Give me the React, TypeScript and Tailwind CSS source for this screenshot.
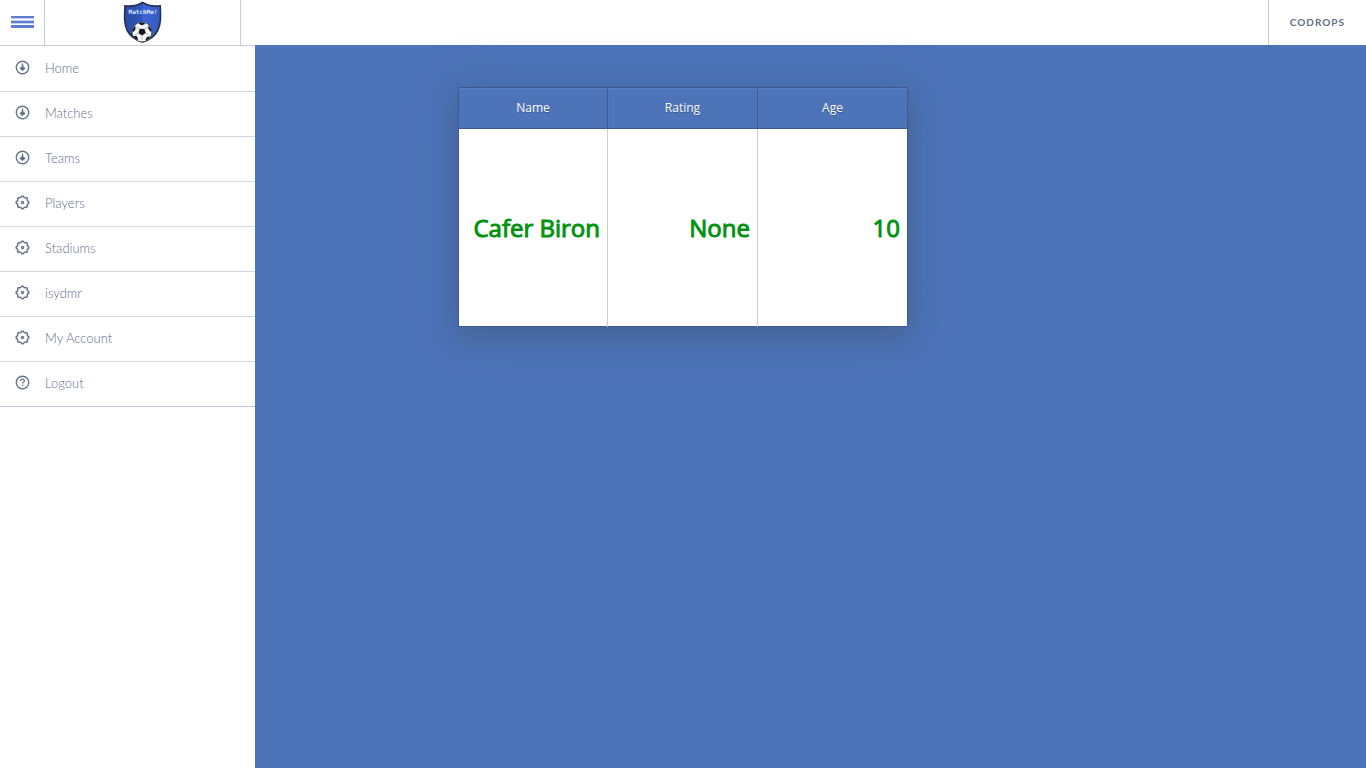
import React from "react";

type IconName = "arrow" | "cog" | "help";

const items: { label: string; icon: IconName }[] = [
  { label: "Home", icon: "arrow" },
  { label: "Matches", icon: "arrow" },
  { label: "Teams", icon: "arrow" },
  { label: "Players", icon: "cog" },
  { label: "Stadiums", icon: "cog" },
  { label: "isydmr", icon: "cog" },
  { label: "My Account", icon: "cog" },
  { label: "Logout", icon: "help" },
];

const gearPath = (() => {
  const points: string[] = [];
  for (let i = 0; i < 64; i++) {
    const a = (i / 64) * Math.PI * 2;
    const r = 5.8 + 0.5 * Math.tanh(2.5 * Math.cos(8 * a));
    points.push(`${(7.5 + r * Math.sin(a)).toFixed(2)} ${(7.5 - r * Math.cos(a)).toFixed(2)}`);
  }
  return `M${points.join("L")}Z`;
})();

function MenuIcon({ name }: { name: IconName }) {
  return (
    <svg viewBox="0 0 15 15" className="size-[15px] shrink-0" fill="none" stroke="#66748c" aria-hidden="true">
      {name === "cog" ? (
        <>
          <path d={gearPath} strokeWidth="1.5" strokeLinejoin="round" />
          <circle cx="7.5" cy="7.5" r="1.1" strokeWidth="1.3" />
        </>
      ) : (
        <circle cx="7.5" cy="7.5" r="6.2" strokeWidth="1.4" />
      )}
      {name === "arrow" && (
        <path d="M7 3.5h1l.5 3.500 1.700.8v1L7.500 11 4.800 8.800v-1L6.500 7Z" fill="#5f6f8c" stroke="none" />
      )}
      {name === "help" && (
        <>
          <path d="M5.6 6.1c0-1.2.8-1.9 1.9-1.9s1.9.7 1.9 1.7c0 1.2-1.8 1.2-1.8 2.6" strokeWidth="1.3" />
          <path d="M6.9 9.6h1.4v1.3H6.9Z" fill="#66748c" stroke="none" />
        </>
      )}
    </svg>
  );
}

function Logo() {
  return (
    <svg viewBox="0 0 40 42" className="h-[42px] w-10" role="img" aria-label="MatchMe!">
      <defs>
        <linearGradient id="shield" x1="0" x2="1">
          <stop offset="0" stopColor="#2a4ba4" />
          <stop offset=".5" stopColor="#3158c0" />
          <stop offset=".5" stopColor="#3f68d8" />
          <stop offset="1" stopColor="#3559be" />
        </linearGradient>
        <clipPath id="ball">
          <circle cx="19" cy="31" r="9.6" />
        </clipPath>
      </defs>
      <path
        d="M19.500 1.500c4.800 3 11 4.200 17.700 3.400.6 11 .8 18-2.500 24.600C31.500 35.500 26.500 39 19.500 41 12.500 39 7.500 35.500 4.200 29.500 1 23 1.400 16 2 4.900 9 5.700 14.700 4.500 19.500 1.500Z"
        fill="url(#shield)"
        stroke="#263249"
        strokeWidth="1.6"
      />
      <text x="20" y="13" textAnchor="middle" fontSize="6" fontWeight="700" fill="#dce6ff" fontFamily="DejaVu Sans Mono, monospace">
        MatchMe!
      </text>
      <circle cx="19" cy="31" r="9.900" fill="#f6f7f9" stroke="#1b202b" strokeWidth=".6" />
      <g clipPath="url(#ball)" fill="#11141b">
        <path d="m16.800 27.800 4.600.2 1.400 4-3.800 2.600-3.600-2.600Z" />
        <path d="m15.500 21 6-.2.500 2.200-3 1.300-3-1.200Z" />
        <path d="m25.300 24.500 3.500 3.500.3 3-2.200-.8-1.600-3Z" />
        <path d="m9 27 3.500-2-.2 3.500-2 2.500-2-.5Z" />
        <path d="m10.800 34.800 3 .5 1.300 3-1.300 2-4-3Z" />
        <path d="m22.500 38.800 1.500-2.800 3-.7-1 4-3 1Z" />
      </g>
      <path
        d="m16.800 27.800-3.800-1.500m8.400 1.700 3.300-1.500m-1.900 5.500 3 2.300m-6.800.3.200 4m-3.800-6.600-3.400 2"
        stroke="#8b909a"
        strokeWidth=".6"
        fill="none"
      />
    </svg>
  );
}

const headers = ["Name", "Rating", "Age"];
const players = [["Cafer Biron", "None", "10"]];

export default function App() {
  return (
    <div className="flex min-h-screen flex-col bg-[#4d73b8] font-['Lato',sans-serif]">
      <header className="flex h-[45px] items-stretch bg-white">
        <button type="button" aria-label="Menu" className="flex w-[45px] items-center justify-center border-r border-[#c6cbdf] pb-0.5">
          <svg viewBox="0 0 23 12" className="h-3 w-[23px]" aria-hidden="true">
            <path fill="#5c7fd3" d="M0 0h23v2H0zM0 5h23v2H0zM0 9h23v3H0z" />
            <path fill="#c7d3f0" d="M0 2h23v1H0zM0 4h23v1H0zM0 7h23v1H0z" />
          </svg>
        </button>
        <a href="#home" className="flex w-[196px] items-center justify-center border-r border-[#c6cbdf] pb-0.5">
          <Logo />
        </a>
        <a
          href="#codrops"
          className="ml-auto flex items-center border-l border-[#c6cbdf] px-[21px] text-[10px] font-bold tracking-widest text-[#5f6f81]"
        >
          CODROPS
        </a>
      </header>
      <div className="flex flex-1">
        <nav className="w-[255px] shrink-0 border-t border-[#c6cbdf] bg-white pt-px">
          <ul>
            {items.map((item) => (
              <li key={item.label} className="border-b border-[#d3d7e4] last:border-[#bcc6da]">
                <a href="#menu" className="flex h-11 items-center px-[15px] pb-1 text-[13px] leading-5 font-light text-[#5f6f91]">
                  <MenuIcon name={item.icon} />
                  <span className="pt-0.5 pl-[15px]">{item.label}</span>
                </a>
              </li>
            ))}
          </ul>
        </nav>
        <main className="flex-1 font-['Open_Sans',sans-serif]">
          <table className="mt-[42px] ml-[203px] w-[450px] table-fixed border-collapse border border-[#3a5a95] bg-white shadow-[0_8px_24px_rgba(60,70,90,0.4),0_4px_50px_rgba(75,120,165,0.35)]">
            <thead>
              <tr>
                {headers.map((h) => (
                  <th
                    key={h}
                    scope="col"
                    className="h-[41px] border border-[#3a5a95] bg-[#4d73b8] text-center text-xs font-normal text-white shadow-[inset_0_1px_2px_#5c83c6] [text-shadow:0_1px_0_#38568f] first:w-[149px]"
                  >
                    {h}
                  </th>
                ))}
              </tr>
            </thead>
            <tbody>
              {players.map((row) => (
                <tr key={row[0]}>
                  {row.map((cell) => (
                    <td
                      key={cell}
                      className="h-[198px] border-r border-[#cccccc] pr-[7px] text-right text-2xl font-normal whitespace-nowrap text-[#009310] [-webkit-text-stroke:1px_#009310] last:border-[#3a5a95]"
                    >
                      {cell}
                    </td>
                  ))}
                </tr>
              ))}
            </tbody>
          </table>
        </main>
      </div>
    </div>
  );
}
